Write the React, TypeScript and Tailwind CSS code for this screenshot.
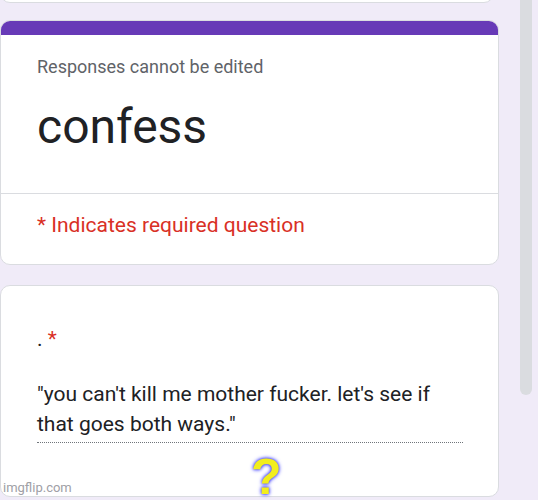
import React from "react";

const font = { fontFamily: "Roboto, 'Liberation Sans', sans-serif" };

function QuestionCard() {
  return (
    <div className="relative mt-[20px] h-[212px] w-[499px] rounded-[10px] border border-[#dadce0] bg-white pl-[36px] pt-[39px]">
      <div className="text-[21px] leading-[28px] text-[#202124]">
        . <span className="text-[#d93025]">*</span>
      </div>
      <div className="mt-[26px] w-[426px] border-b border-dotted border-[#70757a] pb-[3px] text-[21px] leading-[30px] text-[#202124]">
        "you can't kill me mother fucker. let's see if that goes both ways."
      </div>
      <div className="absolute left-[250px] top-[173px] text-[50px] font-bold leading-[36px] text-[#f2ee1c] [font-family:'Liberation_Sans',sans-serif] [text-shadow:0_0_3px_#3b3bff,0_0_4px_#3b3bff]">
        ?
      </div>
      <div className="absolute bottom-[1px] left-[2px] text-[13px] leading-[15px] text-[#a0a0a6]">
        imgflip.com
      </div>
    </div>
  );
}

export default function App() {
  return (
    <div className="flex h-[500px] w-[538px] overflow-hidden bg-[#f0ebf8]" style={font}>
      <div className="flex w-[499px] flex-col">
        <div className="-mt-[11px] h-[14px] w-[494px] rounded-b-[10px] border border-[#dadce0] bg-white" />
        <div className="mt-[17px] w-[499px] overflow-hidden rounded-[10px] border border-[#dadce0] bg-white">
          <div className="h-[14px] bg-[#673ab7]" />
          <div className="pl-[36px] pt-[20px] pb-[38px]">
            <div className="text-[18px] leading-[24px] text-[#5f6368]">Responses cannot be edited</div>
            <div className="mt-[20px] text-[48px] leading-[56px] text-[#202124]">confess</div>
          </div>
          <div className="border-t border-[#dadce0] pl-[36px] pt-[17px] pb-[25px]">
            <div className="text-[21px] leading-[28px] text-[#d93025]">* Indicates required question</div>
          </div>
        </div>
        <QuestionCard />
      </div>
      <div className="ml-[21px] h-[395px] w-[12px] rounded-b-full bg-[#dadce0]" />
    </div>
  );
}
